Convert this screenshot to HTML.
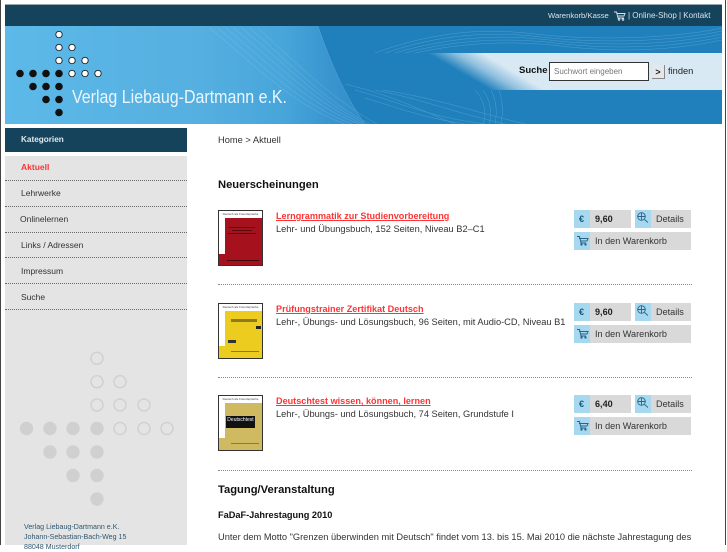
<!DOCTYPE html>
<html><head><meta charset="utf-8"><title>Verlag Liebaug-Dartmann e.K.</title>
<style>
html,body{margin:0;padding:0;background:#fff}
body{width:727px;height:545px;position:relative;overflow:hidden;font-family:"Liberation Sans",sans-serif;font-size:9px;color:#333}
.a{position:absolute;white-space:nowrap}
.nav{left:21px;font-size:8.5px;line-height:12px;color:#333}
.line{position:absolute;left:5px;width:182px;border-top:1px dotted #666;height:0}
.h{left:218px;font-size:11.2px;font-weight:bold;color:#111;line-height:14px}
.t{left:276px;font-size:9.27px;line-height:12px;color:#333}
.l{left:276px;font-size:9.1px;font-weight:bold;color:#f33;text-decoration:underline;line-height:12px}
.btn{position:absolute;height:18px;background:#d9d9d9}
.ic{position:absolute;left:0;top:0;width:16px;height:18px;background:#a6d8f0}
.ic svg{display:block}
.bt{position:absolute;top:0;line-height:19px;font-size:9.1px;color:#333;white-space:nowrap}
.cover{position:absolute;left:218px;width:43px;height:54px;border:1px solid #333;overflow:hidden;background:#fff}
.cover div{position:absolute}
.ct{left:0;top:0;width:43px;height:7px;font-size:3px;text-align:center;line-height:7px;color:#444}
.sep{position:absolute;left:218px;width:474px;border-top:1px dotted #888;height:0}
</style></head><body>
<div class="a" style="left:0;top:0;width:1px;height:545px;background:#444"></div>
<div class="a" style="left:725px;top:0;width:1px;height:545px;background:#444"></div>
<div class="a" style="left:5px;top:4px;width:717px;height:1px;background:#9aa8b0"></div>
<div class="a" style="left:5px;top:5px;width:717px;height:21px;background:#16435c"></div>
<svg class="a" style="left:5px;top:26px" width="717" height="98" viewBox="0 0 717 98">
<defs>
<linearGradient id="g" x1="0" x2="1" y1="0" y2="0"><stop offset="0" stop-color="#5cb9e8"/><stop offset=".55" stop-color="#55afe0"/><stop offset=".78" stop-color="#47a5da"/><stop offset=".9" stop-color="#3a95cf"/><stop offset="1" stop-color="#2e8cc8"/></linearGradient>
<linearGradient id="b" gradientUnits="userSpaceOnUse" x1="422" y1="27" x2="436" y2="3"><stop offset="0" stop-color="#d9e9f4" stop-opacity="0"/><stop offset=".5" stop-color="#d9e9f4" stop-opacity=".6"/><stop offset="1" stop-color="#d9e9f4"/></linearGradient>
</defs>
<rect width="717" height="98" fill="#1f80bc"/>
<path d="M0 0H313C325 35 340 70 360 98H0Z" fill="url(#g)"/>
<g fill="none" stroke="#bfe2f5" stroke-width=".5" opacity=".3">
<path d="M205 2C250 40 290 80 340 98"/><path d="M213 2C258 40 298 80 347 98"/><path d="M221 2C266 40 306 80 354 98"/><path d="M229 2C274 40 314 80 358 98"/><path d="M237 2C282 40 320 80 362 98"/><path d="M245 2C288 40 325 80 366 98"/><path d="M253 2C294 40 330 75 372 98"/>
<path d="M313 0C325 35 340 70 360 98" opacity="1"/>
<path d="M370 27C430 5 480 2 530 8S660 14 717 2"/><path d="M380 27C436 8 486 5 536 11S660 17 717 5"/><path d="M390 27C444 11 494 8 544 14S660 20 717 8"/><path d="M400 27C450 14 500 11 550 17S660 23 717 11"/><path d="M410 27C456 17 506 14 556 20S660 26 717 14"/>
<path d="M350 64C400 78 420 90 480 98"/><path d="M360 72C400 84 420 92 460 98"/><path d="M370 64C420 74 440 84 500 98"/><path d="M340 58C390 70 420 86 450 98"/><path d="M378 64C430 72 470 86 520 98"/>
<path d="M470 64C480 75 482 88 478 98"/><path d="M478 64C486 75 487 88 484 98"/><path d="M486 64C492 75 492 88 490 98"/><path d="M494 64C498 75 498 88 496 98"/>
</g>
<rect x="400" y="27" width="317" height="37" fill="url(#b)"/>
<g fill="#111"><circle cx="15" cy="47.5" r="3.8"/><circle cx="28" cy="47.5" r="3.8"/><circle cx="41" cy="47.5" r="3.8"/><circle cx="54" cy="47.5" r="3.8"/><circle cx="28" cy="60.5" r="3.8"/><circle cx="41" cy="60.5" r="3.8"/><circle cx="54" cy="60.5" r="3.8"/><circle cx="41" cy="73.5" r="3.8"/><circle cx="54" cy="73.5" r="3.8"/><circle cx="54" cy="86.5" r="3.8"/></g>
<g fill="#fff" stroke="#222" stroke-width=".9"><circle cx="54" cy="8.5" r="3.2"/><circle cx="54" cy="21.5" r="3.2"/><circle cx="67" cy="21.5" r="3.2"/><circle cx="54" cy="34.5" r="3.2"/><circle cx="67" cy="34.5" r="3.2"/><circle cx="80" cy="34.5" r="3.2"/><circle cx="67" cy="47.5" r="3.2"/><circle cx="80" cy="47.5" r="3.2"/><circle cx="93" cy="47.5" r="3.2"/></g>
<text x="67" y="77" font-family="Liberation Sans" font-size="18" fill="#eaf6fc" textLength="215" lengthAdjust="spacingAndGlyphs">Verlag Liebaug-Dartmann e.K.</text>
</svg>
<div class="a" style="left:548px;top:10px;font-size:7.7px;line-height:11px;color:#d5e2ea">Warenkorb/Kasse</div>
<svg class="a" style="left:614px;top:11px" width="12" height="10" viewBox="0 0 12 10" fill="none" stroke="#d5e2ea" stroke-width=".9"><path d="M0 1H2.5L4 7H10M3 2.500H11L10 5H4"/><circle cx="5" cy="8.500" r=".8"/><circle cx="9" cy="8.500" r=".8"/></svg>
<div class="a" style="left:628px;top:10px;font-size:8px;line-height:11px;color:#d5e2ea">| Online-Shop | Kontakt</div>
<div class="a" style="left:519px;top:65px;font-size:9.5px;font-weight:bold;line-height:12px;color:#111">Suche</div>
<div class="a" style="left:549px;top:62px;width:98px;height:17px;background:#fff;border:1px solid #333;font-size:8px;line-height:17px;color:#777;text-indent:4px">Suchwort eingeben</div>
<div class="a" style="left:652px;top:65px;width:12px;height:13px;background:#e4e8ea;border-right:1px solid #888;border-bottom:1px solid #888;font-size:9px;font-weight:bold;line-height:14px;text-align:center;color:#222">&gt;</div>
<div class="a" style="left:668px;top:65px;font-size:9.3px;line-height:12px;color:#222">finden</div>

<div class="a" style="left:5px;top:128px;width:182px;height:24px;background:#16435c"></div>
<div class="a" style="left:21px;top:134px;font-size:8.2px;font-weight:bold;line-height:12px;color:#dfe8ee">Kategorien</div>
<div class="a" style="left:5px;top:156px;width:182px;height:389px;background:#e4e4e4"></div>
<div class="a nav" style="top:161px;font-weight:bold;color:#f33">Aktuell</div>
<div class="line" style="top:180px"></div>
<div class="a nav" style="top:187px">Lehrwerke</div>
<div class="line" style="top:206px"></div>
<div class="a nav" style="top:213px;left:20px">Onlinelernen</div>
<div class="line" style="top:232px"></div>
<div class="a nav" style="top:239px">Links / Adressen</div>
<div class="line" style="top:257px"></div>
<div class="a nav" style="top:265px">Impressum</div>
<div class="line" style="top:283px"></div>
<div class="a nav" style="top:291px">Suche</div>
<div class="line" style="top:309px"></div>
<svg class="a" style="left:5px;top:340px" width="182" height="175" viewBox="0 0 182 175">
<g fill="#d0d0d0"><circle cx="21.5" cy="88.5" r="6.7"/><circle cx="45" cy="88.5" r="6.7"/><circle cx="68" cy="88.5" r="6.7"/><circle cx="92" cy="88.5" r="6.7"/><circle cx="45" cy="112" r="6.7"/><circle cx="68" cy="112" r="6.7"/><circle cx="92" cy="112" r="6.7"/><circle cx="68" cy="135.5" r="6.7"/><circle cx="92" cy="135.5" r="6.7"/><circle cx="92" cy="159" r="6.7"/></g>
<g fill="none" stroke="#d0d0d0" stroke-width="1.4"><circle cx="92" cy="18.3" r="6"/><circle cx="92" cy="41.7" r="6"/><circle cx="115" cy="41.7" r="6"/><circle cx="92" cy="65" r="6"/><circle cx="115" cy="65" r="6"/><circle cx="139" cy="65" r="6"/><circle cx="115" cy="88.5" r="6"/><circle cx="139" cy="88.5" r="6"/><circle cx="162" cy="88.5" r="6"/></g>
</svg>
<div class="a" style="left:24px;top:522px;font-size:7.1px;line-height:10px;color:#2e5872">Verlag Liebaug-Dartmann e.K.<br>Johann-Sebastian-Bach-Weg 15<br>88048 Musterdorf</div>

<div class="a" style="left:218px;top:134px;font-size:9.3px;line-height:12px;color:#333">Home &gt; Aktuell</div>
<div class="a h" style="top:178px">Neuerscheinungen</div>

<div class="cover" style="top:210px"><div class="ct">Deutsch als Fremdsprache</div><div style="left:6px;top:7px;width:37px;height:37px;background:#a5121e"></div><div style="left:0;top:43px;width:43px;height:11px;background:#a5121e"></div><div style="left:10px;top:16px;width:26px;height:1px;background:#5a0a10"></div><div style="left:13px;top:19px;width:20px;height:1px;background:#5a0a10"></div><div style="left:9px;top:22px;width:28px;height:1px;background:#3a0a10"></div><div style="left:8px;top:49px;width:32px;height:1px;background:#40070c"></div></div>
<div class="a l" style="top:210px">Lerngrammatik zur Studienvorbereitung</div>
<div class="a t" style="top:223px">Lehr- und Übungsbuch, 152 Seiten, Niveau B2–C1</div>

<div class="cover" style="top:303px"><div class="ct">Deutsch als Fremdsprache</div><div style="left:6px;top:7px;width:37px;height:37px;background:#eccd1f"></div><div style="left:0;top:42px;width:43px;height:12px;background:#eccd1f"></div><div style="left:12px;top:15px;width:26px;height:3px;background:#8a7a20"></div><div style="left:37px;top:22px;width:5px;height:3px;background:#222"></div><div style="left:9px;top:36px;width:8px;height:3px;background:#333"></div><div style="left:12px;top:47px;width:28px;height:1px;background:#8a7a20"></div></div>
<div class="a l" style="top:303px">Prüfungstrainer Zertifikat Deutsch</div>
<div class="a t" style="top:316px">Lehr-, Übungs- und Lösungsbuch, 96 Seiten, mit Audio-CD, Niveau B1</div>

<div class="cover" style="top:395px"><div class="ct">Deutsch als Fremdsprache</div><div style="left:6px;top:7px;width:37px;height:37px;background:#cfba62"></div><div style="left:0;top:42px;width:43px;height:12px;background:#cfba62"></div><div style="left:7px;top:20px;width:29px;height:12px;background:#111;color:#fff;font-size:5px;line-height:9px;text-align:center;overflow:hidden">Deutschtest</div><div style="left:12px;top:47px;width:28px;height:1px;background:#8a7a40"></div></div>
<div class="a l" style="top:395px">Deutschtest wissen, können, lernen</div>
<div class="a t" style="top:408px">Lehr-, Übungs- und Lösungsbuch, 74 Seiten, Grundstufe I</div>

<div class="btn" style="left:574px;top:210px;width:57px"><div class="ic"></div><div class="bt" style="left:5px;font-weight:bold;color:#1f5a80">€</div><div class="bt" style="left:21px;font-weight:bold;color:#222">9,60</div></div>
<div class="btn" style="left:635px;top:210px;width:56px"><div class="ic"><svg width="16" height="18" fill="none" stroke="#2a6488" stroke-width=".9"><circle cx="6.500" cy="6.500" r="3.800"/><path d="M6.500 3V10M3 6.500H10M9.500 9.500L13 12.500"/></svg></div><div class="bt" style="left:21px">Details</div></div>
<div class="btn" style="left:574px;top:232px;width:117px"><div class="ic"><svg width="16" height="18" fill="none" stroke="#2a6488"><path d="M3 4.500H5.500L7 11H12M5 6.500H14L13 9H6.500"/><circle cx="7.500" cy="12.500" r=".7"/><circle cx="11.500" cy="12.500" r=".7"/></svg></div><div class="bt" style="left:21px">In den Warenkorb</div></div>

<div class="sep" style="top:284px"></div>

<div class="btn" style="left:574px;top:303px;width:57px"><div class="ic"></div><div class="bt" style="left:5px;font-weight:bold;color:#1f5a80">€</div><div class="bt" style="left:21px;font-weight:bold;color:#222">9,60</div></div>
<div class="btn" style="left:635px;top:303px;width:56px"><div class="ic"><svg width="16" height="18" fill="none" stroke="#2a6488" stroke-width=".9"><circle cx="6.500" cy="6.500" r="3.800"/><path d="M6.500 3V10M3 6.500H10M9.500 9.500L13 12.500"/></svg></div><div class="bt" style="left:21px">Details</div></div>
<div class="btn" style="left:574px;top:325px;width:117px"><div class="ic"><svg width="16" height="18" fill="none" stroke="#2a6488"><path d="M3 4.500H5.500L7 11H12M5 6.500H14L13 9H6.500"/><circle cx="7.500" cy="12.500" r=".7"/><circle cx="11.500" cy="12.500" r=".7"/></svg></div><div class="bt" style="left:21px">In den Warenkorb</div></div>

<div class="sep" style="top:377px"></div>

<div class="btn" style="left:574px;top:395px;width:57px"><div class="ic"></div><div class="bt" style="left:5px;font-weight:bold;color:#1f5a80">€</div><div class="bt" style="left:21px;font-weight:bold;color:#222">6,40</div></div>
<div class="btn" style="left:635px;top:395px;width:56px"><div class="ic"><svg width="16" height="18" fill="none" stroke="#2a6488" stroke-width=".9"><circle cx="6.500" cy="6.500" r="3.800"/><path d="M6.500 3V10M3 6.500H10M9.500 9.500L13 12.500"/></svg></div><div class="bt" style="left:21px">Details</div></div>
<div class="btn" style="left:574px;top:417px;width:117px"><div class="ic"><svg width="16" height="18" fill="none" stroke="#2a6488"><path d="M3 4.500H5.500L7 11H12M5 6.500H14L13 9H6.500"/><circle cx="7.500" cy="12.500" r=".7"/><circle cx="11.500" cy="12.500" r=".7"/></svg></div><div class="bt" style="left:21px">In den Warenkorb</div></div>

<div class="sep" style="top:470px"></div>
<div class="a h" style="top:483px">Tagung/Veranstaltung</div>
<div class="a" style="left:218px;top:509px;font-size:9.2px;font-weight:bold;line-height:12px;color:#111">FaDaF-Jahrestagung 2010</div>
<div class="a" style="left:218px;top:531px;font-size:9.27px;line-height:12px;color:#333">Unter dem Motto "Grenzen überwinden mit Deutsch" findet vom 13. bis 15. Mai 2010 die nächste Jahrestagung des</div>
</body></html>
